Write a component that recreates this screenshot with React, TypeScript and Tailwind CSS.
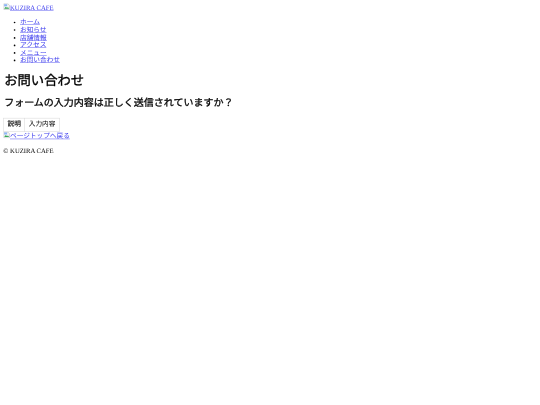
const navItems = ["ホーム", "お知らせ", "店舗情報", "アクセス", "メニュー", "お問い合わせ"];

function BrokenImage() {
  return (
    <svg viewBox="0 0 16 16" className="inline-block w-4 h-4 align-baseline">
      <path d="M1 1h10l4 4v10H1z" fill="#f1f3f4" stroke="#9aa0a6" />
      <path d="M2 13l4-5 3 3 2-2 3 4z" fill="#34a853" />
      <path d="M2 2h7v5H2z" fill="#8ab4f8" />
    </svg>
  );
}

export default function App() {
  return (
    <div className="w-[540px] h-[405px] overflow-hidden bg-white">
      <div className="w-[1296px] origin-top-left scale-[0.41667] blur-[0.7px] p-2 text-base leading-[18.24px] text-black [text-rendering:geometricPrecision] font-['Liberation_Serif','Noto_Sans_CJK_JP',serif]">
        <header>
          <a href="#" className="text-[#3a3aee] underline">
            <BrokenImage />
            KUZIRA CAFE
          </a>
          <ul className="my-4 pl-10 list-disc">
            {navItems.map((item) => (
              <li key={item}>
                <a href="#" className="text-[#3a3aee] underline">
                  {item}
                </a>
              </li>
            ))}
          </ul>
        </header>
        <main>
          <h1 className="mt-[21.44px] mb-[21.44px] pl-0.5 text-[32px] leading-[36.5px] font-normal [-webkit-text-stroke:0.8px_black]">
            お問い合わせ
          </h1>
          <h2 className="mt-[19.9px] mb-[22px] pl-0.5 text-2xl leading-[27.4px] font-normal [-webkit-text-stroke:0.7px_black]">
            フォームの入力内容は正しく送信されていますか？
          </h2>
          <table className="border-collapse">
            <tbody>
              <tr>
                <th className="border border-[#cccccc] px-[9px] py-1.5 font-normal [-webkit-text-stroke:0.3px_black]">説明</th>
                <td className="border border-[#cccccc] px-[9px] py-1.5">入力内容</td>
              </tr>
            </tbody>
          </table>
          <a href="#" className="block text-[#3a3aee] underline">
            <BrokenImage />
            ページトップへ戻る
          </a>
        </main>
        <footer className="mt-4">© KUZIRA CAFE</footer>
      </div>
    </div>
  );
}
